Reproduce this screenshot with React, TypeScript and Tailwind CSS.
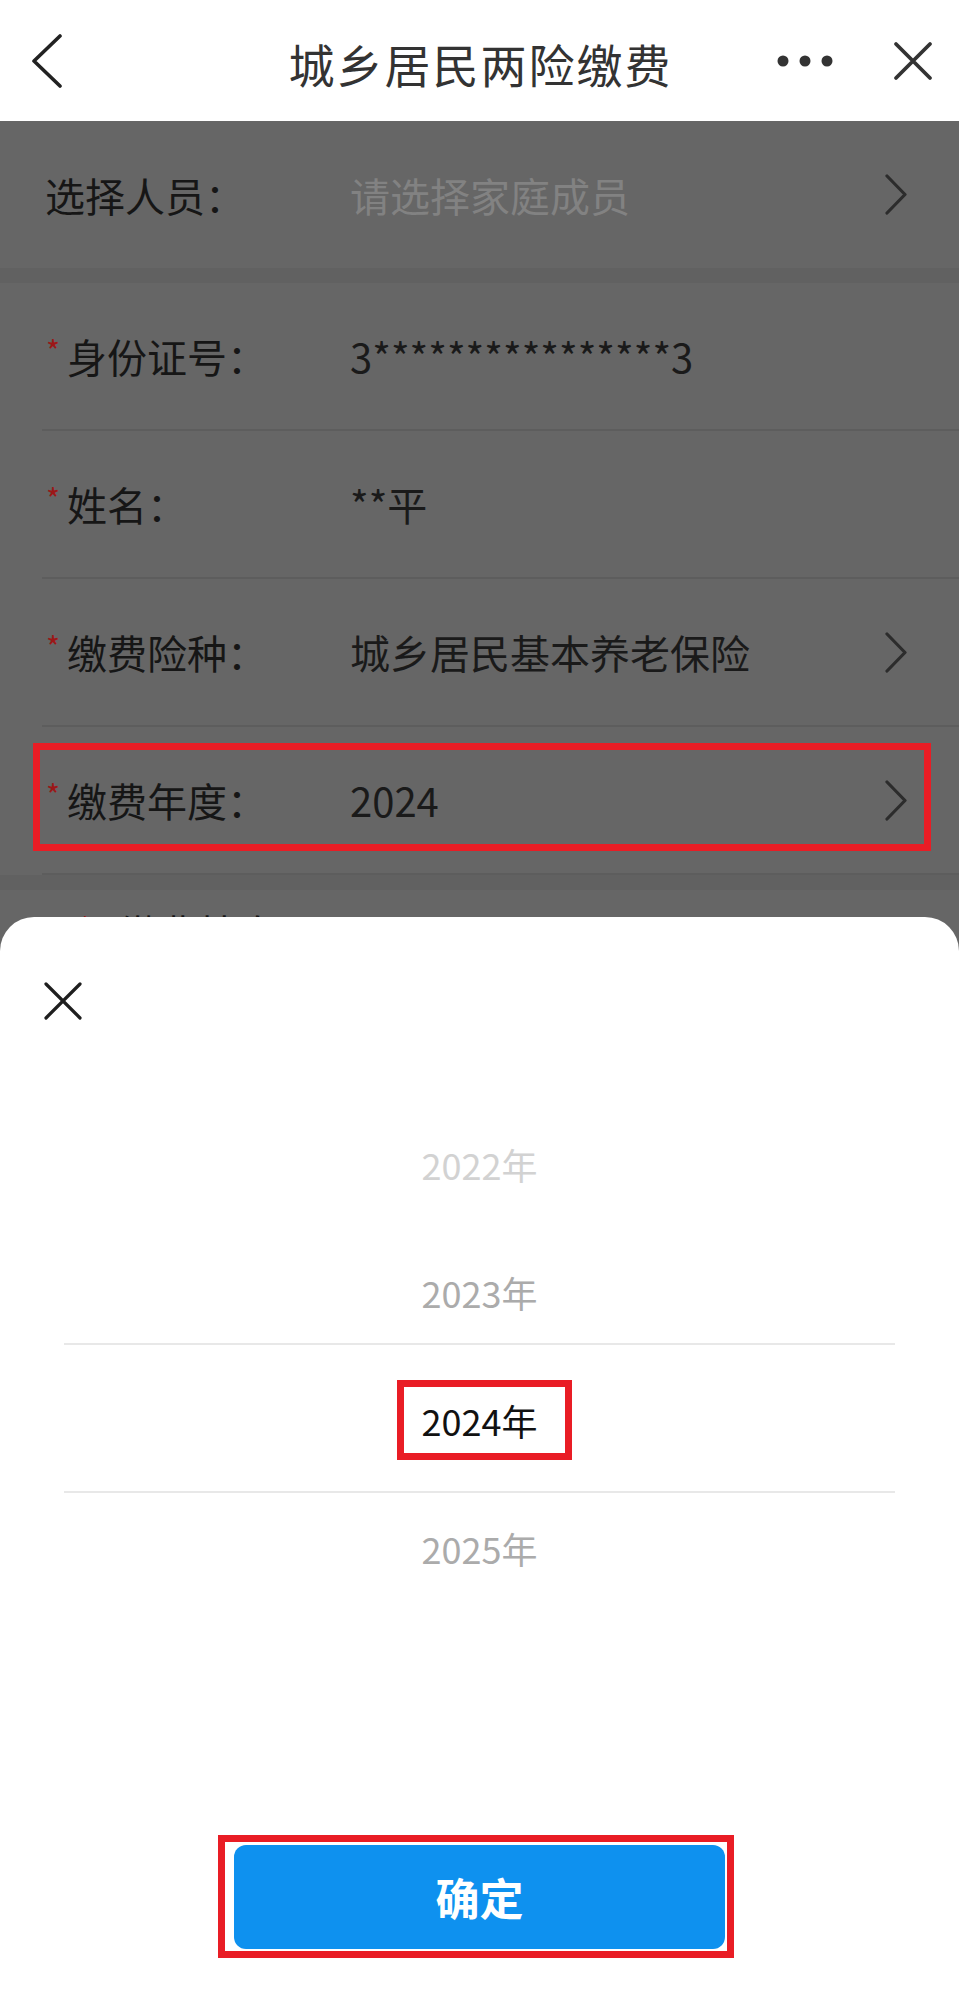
import React from "react";

const RED = "border-[#e91d25]";

function Chevron() {
  return (
    <svg width="24" height="41" viewBox="0 0 24 41" className="shrink-0">
      <path d="M3 2 L21 20.5 L3 39" fill="none" stroke="#2c2c2c" strokeWidth="3.2" strokeLinecap="round" strokeLinejoin="round" />
    </svg>
  );
}

function Row({
  label,
  value,
  chevron,
  annotated,
}: {
  label: string;
  value: string;
  chevron?: boolean;
  annotated?: boolean;
}) {
  return (
    <div className="relative ml-[42px] h-[148px] border-b-2 border-[#5d5d5d] flex items-center pl-[4px] pr-[51px]">
      <div className="w-[304px] shrink-0 flex items-start">
        <span className="w-[21px] text-[30px] leading-none text-[#9c1717] relative -top-[1px]">*</span>
        <span className="text-[40px] leading-[40px] text-[#161616]">{label}</span>
      </div>
      <div className="flex-1 text-[40px] leading-[40px] text-[#1a1a1a]">{value}</div>
      {chevron && <Chevron />}
      {annotated && (
        <div className={`absolute left-[-9px] right-[28px] top-[16px] bottom-[22px] border-[7px] ${RED}`} />
      )}
    </div>
  );
}

export default function App() {
  return (
    <div className="relative w-[959px] h-[2013px] overflow-hidden bg-[#666666] font-['Noto_Sans_CJK_SC','Noto_Sans',sans-serif]">
      {/* Header */}
      <div className="h-[121px] bg-white grid grid-cols-[1fr_auto_1fr] items-center">
        <div className="pl-[30px] flex items-center">
          <svg width="34" height="54" viewBox="0 0 34 54">
            <path d="M30 2 L4 27 L30 52" fill="none" stroke="#222" strokeWidth="3.6" strokeLinecap="round" strokeLinejoin="round" />
          </svg>
        </div>
        <div className="text-[46px] leading-none tracking-[2px] -mr-[2px] text-[#333] relative top-[2px]">城乡居民两险缴费</div>
        <div className="flex justify-end items-center pr-[26px] gap-[60px]">
          <svg width="56" height="12" viewBox="0 0 56 12">
            <circle cx="6" cy="6" r="5.5" fill="#333" />
            <circle cx="28" cy="6" r="5.5" fill="#333" />
            <circle cx="50" cy="6" r="5.5" fill="#333" />
          </svg>
          <svg width="40" height="40" viewBox="0 0 40 40">
            <path d="M3 3 L37 37 M37 3 L3 37" fill="none" stroke="#333" strokeWidth="3.8" strokeLinecap="round" />
          </svg>
        </div>
      </div>

      {/* Section 1 */}
      <div className="h-[147px] flex items-center pl-[45px] pr-[51px]">
        <div className="w-[305px] shrink-0 text-[40px] leading-[40px] text-[#161616]">选择人员：</div>
        <div className="flex-1 text-[40px] leading-[40px] text-[#828282]">请选择家庭成员</div>
        <Chevron />
      </div>
      <div className="h-[15px] bg-[#616161]" />

      {/* Section 2 */}
      <div>
        <Row label="身份证号：" value="3****************3" />
        <Row label="姓名：" value="**平" />
        <Row label="缴费险种：" value="城乡居民基本养老保险" chevron />
        <Row label="缴费年度：" value="2024" chevron annotated />
      </div>
      <div className="h-[15px] bg-[#616161]" />

      {/* Section 3 (mostly hidden behind the sheet) */}
      <div className="pt-[22px] pl-[78px] flex items-start">
        <span className="w-[40px] text-[30px] leading-none text-[#9c1717]">*</span>
        <span className="text-[40px] leading-[40px] text-[#161616]">缴费档次：</span>
      </div>

      {/* Bottom sheet */}
      <div className="absolute left-0 right-0 bottom-0 top-[917px] bg-white rounded-t-[34px] flex flex-col">
        <div className="pt-[64px] pl-[43px]">
          <svg width="40" height="40" viewBox="0 0 40 40">
            <path d="M3 3 L37 37 M37 3 L3 37" fill="none" stroke="#1e1e1e" strokeWidth="3.2" strokeLinecap="round" />
          </svg>
        </div>

        <div className="relative mt-[79px]">
          <div className="absolute left-[64px] right-[64px] top-[243px] h-[2px] bg-[#e8e8e8]" />
          <div className="absolute left-[64px] right-[64px] top-[391px] h-[2px] bg-[#e8e8e8]" />
          <div className="h-[128px] flex items-center justify-center text-[36px] leading-none text-[#d2d2d2]">2022年</div>
          <div className="h-[128px] flex items-center justify-center text-[36px] leading-none text-[#ababab]">2023年</div>
          <div className="h-[128px] flex items-center justify-center">
            <span className="relative text-[36px] leading-none text-[#111]">
              2024年
              <span className={`absolute -left-[25px] -right-[35px] -top-[22px] -bottom-[22px] border-[7px] ${RED}`} />
            </span>
          </div>
          <div className="h-[128px] flex items-center justify-center text-[36px] leading-none text-[#ababab]">2025年</div>
        </div>

        <div className="mt-auto mb-[64px] self-center relative">
          <div className="w-[491px] h-[104px] bg-[#0e91ef] rounded-[12px] flex items-center justify-center text-white text-[44px] font-bold leading-none">
            确定
          </div>
          <div className={`absolute -left-[16px] -right-[9px] -top-[10px] -bottom-[9px] border-[7px] ${RED}`} />
        </div>
      </div>
    </div>
  );
}
